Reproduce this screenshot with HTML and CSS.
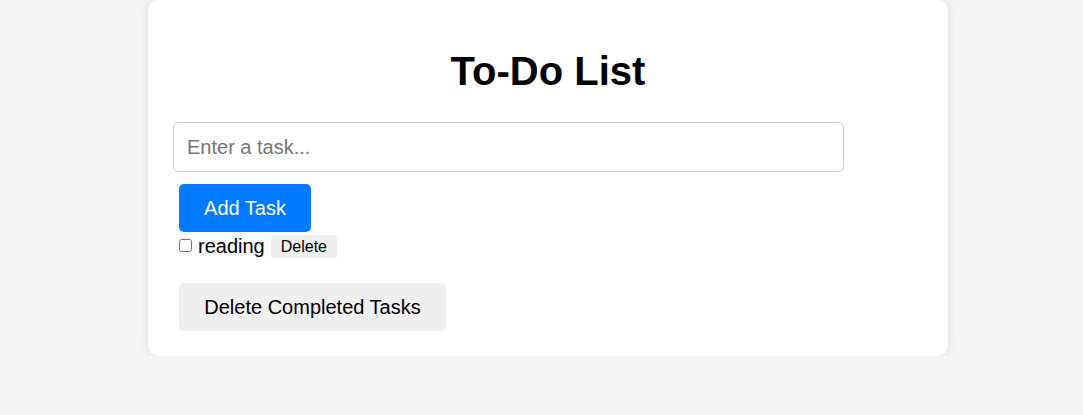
FILE: index.html
```html
<!DOCTYPE html>
<html>
<head>
<meta charset="utf-8">
<link rel="stylesheet" href="styles.css">
</head>
<body>
<div class="card">
  <h1 class="title">To-Do List</h1>
  <input class="task-input" type="text" placeholder="Enter a task...">
  <button class="add-btn">Add Task</button>
  <ul class="task-list">
    <li class="task">
      <input class="task-check" type="checkbox">
      <span class="task-text">reading</span>
      <button class="del-btn">Delete</button>
    </li>
  </ul>
  <button class="clear-btn">Delete Completed Tasks</button>
</div>
</body>
</html>
```
FILE: styles.css
```css
html, body {
  margin: 0;
  background: #f4f4f4;
}
body {
  padding-left: 13px;
  font-family: "Liberation Sans", Arial, sans-serif;
}
.card {
  width: 800px;
  margin: 0 auto;
  box-sizing: border-box;
  background: #fff;
  padding: 25px;
  border-radius: 10px;
  box-shadow: 0 0 10px rgba(0, 0, 0, 0.1);
}
.title {
  text-align: center;
  font-size: 40px;
  line-height: 46px;
  margin: 23px 0 28px;
  color: #000;
}
.task-input {
  display: block;
  width: 671px;
  height: 50px;
  box-sizing: border-box;
  padding: 0 13px;
  border: 1px solid #ccc;
  border-radius: 5px;
  font-family: inherit;
  font-size: 20px;
  outline: none;
}
.task-input::placeholder {
  color: #757575;
}
.add-btn {
  display: block;
  margin: 12px 0 0 6px;
  width: 132px;
  height: 48px;
  border: none;
  border-radius: 5px;
  background: #007bff;
  color: #fff;
  font-family: inherit;
  font-size: 20px;
}
.task-list {
  list-style: none;
  margin: 3px 0 0;
  padding: 0 0 0 6px;
}
.task {
  display: flex;
  align-items: center;
  height: 23px;
  font-size: 20px;
}
.task-check {
  width: 13px;
  height: 13px;
  margin: -3px 6px 0 0;
}
.task-text {
  margin-right: 6px;
}
.del-btn {
  height: 23px;
  padding: 0 10px;
  border: none;
  border-radius: 3px;
  background: #efefef;
  color: #000;
  font-family: inherit;
  font-size: 16px;
}
.clear-btn {
  display: block;
  margin: 25px 0 0 6px;
  width: 267px;
  height: 48px;
  border: none;
  border-radius: 5px;
  background: #efefef;
  color: #000;
  font-family: inherit;
  font-size: 20px;
}
```
